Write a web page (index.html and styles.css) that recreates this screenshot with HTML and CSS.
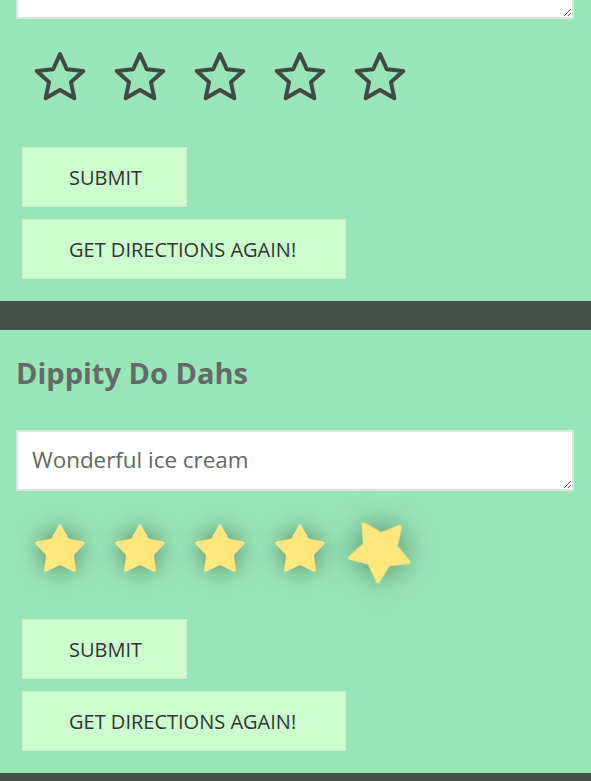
FILE: index.html
```html
<!DOCTYPE html>
<html lang="en">
<head>
<meta charset="utf-8">
<title>Reviews</title>
<link rel="stylesheet" href="styles.css">
</head>
<body>
<svg class="defs" width="0" height="0" aria-hidden="true">
  <defs>
    <polygon id="star-outline" points="25,3 31.76,18.2 48.3,19.93 35.94,31.05 39.4,47.32 25,39 10.6,47.32 14.06,31.05 1.7,19.93 18.24,18.2"/>
    <polygon id="star-solid" points="25,3 32.64,16.98 48.3,19.93 37.36,31.52 39.4,47.32 25,40.5 10.6,47.32 12.64,31.52 1.7,19.93 17.36,16.98"/>
  </defs>
</svg>

<section class="shop shop--cut">
  <textarea class="review"></textarea>
  <div class="rating">
    <svg class="star star--empty" viewBox="0 0 50 50"><use href="#star-outline"/></svg>
    <svg class="star star--empty" viewBox="0 0 50 50"><use href="#star-outline"/></svg>
    <svg class="star star--empty" viewBox="0 0 50 50"><use href="#star-outline"/></svg>
    <svg class="star star--empty" viewBox="0 0 50 50"><use href="#star-outline"/></svg>
    <svg class="star star--empty" viewBox="0 0 50 50"><use href="#star-outline"/></svg>
  </div>
  <div class="actions">
    <button class="btn btn--submit">SUBMIT</button>
    <button class="btn btn--directions">GET DIRECTIONS AGAIN!</button>
  </div>
</section>
<div class="divider"></div>

<section class="shop">
  <h2 class="shop-name">Dippity Do Dahs</h2>
  <textarea class="review">Wonderful ice cream</textarea>
  <div class="rating">
    <svg class="star star--full" viewBox="0 0 50 50"><use href="#star-solid"/></svg>
    <svg class="star star--full" viewBox="0 0 50 50"><use href="#star-solid"/></svg>
    <svg class="star star--full" viewBox="0 0 50 50"><use href="#star-solid"/></svg>
    <svg class="star star--full" viewBox="0 0 50 50"><use href="#star-solid"/></svg>
    <svg class="star star--full star--hover" viewBox="0 0 50 50"><use href="#star-solid"/></svg>
  </div>
  <div class="actions">
    <button class="btn btn--submit">SUBMIT</button>
    <button class="btn btn--directions">GET DIRECTIONS AGAIN!</button>
  </div>
</section>
<div class="divider"></div>
</body>
</html>
```
FILE: styles.css
```css
html, body {
  margin: 0;
  padding: 0;
}

body {
  background: #98e6b8;
  font-family: "Open Sans", "Noto Sans", sans-serif;
  color: #333;
  overflow: hidden;
}

.defs {
  position: absolute;
  width: 0;
  height: 0;
}

.shop {
  padding: 0 17px 22px 16px;
}

.shop--cut {
  margin-top: -42px;
}

.shop-name {
  margin: 25px 0 40px 0;
  font-size: 29px;
  line-height: 35px;
  font-weight: 700;
  color: #646a65;
}

.review {
  display: block;
  box-sizing: border-box;
  width: 100%;
  height: 61px;
  margin: 0;
  padding: 13px 14px 0;
  border: 2px solid #dfe6e0;
  background: #fff;
  font-family: inherit;
  font-size: 22.4px;
  line-height: 30px;
  color: #626862;
  outline: none;
}

.rating {
  display: flex;
  gap: 30px;
  padding: 32px 0 46px 19px;
}

.star {
  display: block;
  width: 50px;
  height: 50px;
  overflow: visible;
}

.star--empty use {
  fill: none;
  stroke: #424842;
  stroke-width: 4;
  stroke-linejoin: round;
}

.star--full {
  filter: drop-shadow(0 0 12px rgba(40, 70, 40, 0.6));
}

.star--full use {
  fill: #ffe77b;
  stroke: #ffe77b;
  stroke-width: 3;
  stroke-linejoin: round;
}

.star--hover {
  transform-origin: 50% 55%;
  transform: rotate(40deg) scale(1.26);
}

.actions {
  display: flex;
  flex-direction: column;
  align-items: flex-start;
  gap: 12px;
  padding-left: 6px;
}

.btn {
  box-sizing: border-box;
  height: 60px;
  margin: 0;
  padding: 0 0 0 46px;
  border: 1px solid #c8f2cc;
  background: #cdfccf;
  font-family: inherit;
  font-size: 20px;
  color: #2f3631;
  text-align: left;
  cursor: pointer;
}

.btn--submit {
  width: 165px;
}

.btn--directions {
  width: 324px;
}

.divider {
  height: 29px;
  background: #474d47;
}
```
